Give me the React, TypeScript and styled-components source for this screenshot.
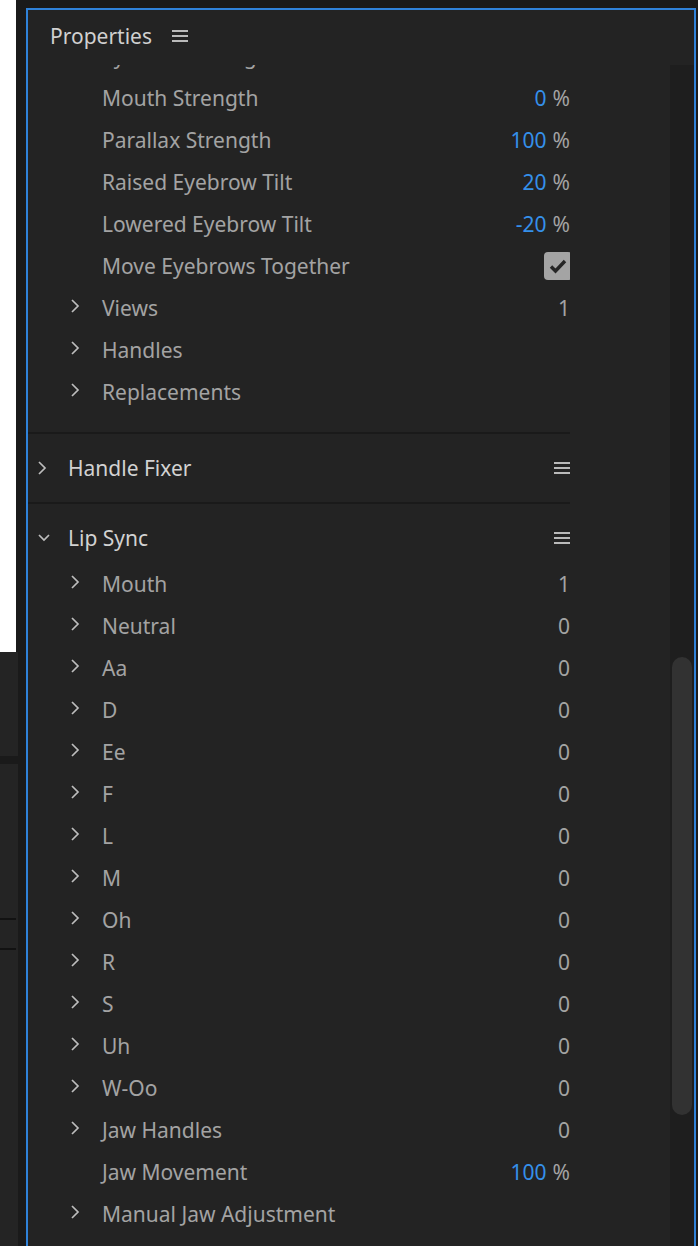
import styled, { createGlobalStyle } from "styled-components";

const GlobalStyle = createGlobalStyle`
  html, body {
    margin: 0;
    padding: 0;
    background: #1a1a1a;
    overflow: hidden;
  }
  body {
    font-family: "Noto Sans", "Open Sans", sans-serif;
  }
`;

const Frame = styled.div`
  display: flex;
  width: 698px;
  height: 1246px;
  overflow: hidden;
`;

const LeftDock = styled.div`
  width: 18px;
  display: flex;
  flex-direction: column;
  flex-shrink: 0;
`;

const WhiteArea = styled.div`
  height: 652px;
  width: 16px;
  background: #ffffff;
`;

const DockPanel = styled.div<{ $h?: number }>`
  background: #242424;
  height: ${(p) => (p.$h ? `${p.$h}px` : "auto")};
  flex: ${(p) => (p.$h ? "none" : "1")};
  display: flex;
  flex-direction: column;
`;

const DockBand = styled.div`
  height: 8px;
  background: #1a1a1a;
`;

const DockLine = styled.div<{ $top: number }>`
  width: 16px;
  height: 2px;
  background: #121212;
  margin-top: ${(p) => p.$top}px;
`;

const Gutter = styled.div`
  width: 8px;
  flex-shrink: 0;
`;

const Panel = styled.section`
  margin-top: 8px;
  width: 670px;
  height: 1260px;
  flex-shrink: 0;
  box-sizing: border-box;
  border: 2px solid #2f82d9;
  background: #232323;
  display: flex;
  flex-direction: column;
`;

const PanelHeader = styled.header`
  height: 55px;
  padding-bottom: 3px;
  box-sizing: border-box;
  flex-shrink: 0;
  display: flex;
  align-items: center;
  gap: 20px;
  padding-left: 22px;
  background: #232323;
`;

const PanelTitle = styled.span`
  font-size: 21px;
  color: #d0d0d0;
`;

const Body = styled.div`
  flex: 1;
  display: flex;
  overflow: hidden;
`;

const Content = styled.div`
  width: 542px;
  flex-shrink: 0;
  overflow: hidden;
`;

// scrolled position of the property list
const ScrollInner = styled.div<{ $offset: number }>`
  margin-top: ${(p) => -p.$offset}px;
`;

const Spacer = styled.div`
  flex: 1;
`;

const ScrollTrack = styled.div`
  width: 24px;
  background: #1e1e1e;
  padding: 0 2px;
  box-sizing: border-box;
`;

const ScrollThumb = styled.div`
  margin-top: 592px;
  height: 458px;
  border-radius: 10px;
  background: #323232;
`;

const SectionBody = styled.div<{ $padBottom?: number }>`
  padding-bottom: ${(p) => p.$padBottom ?? 0}px;
`;

const Divider = styled.div`
  height: 2px;
  background: #1a1a1a;
`;

const SectionHeader = styled.div<{ $padTop: number; $padBottom: number }>`
  height: 42px;
  padding: ${(p) => p.$padTop}px 0 ${(p) => p.$padBottom}px;
  display: flex;
  align-items: center;
`;

const SectionToggle = styled.span`
  width: 31px;
  padding-left: 9px;
  display: flex;
  align-items: center;
  color: #bdbdbd;
`;

const SectionTitle = styled.span`
  flex: 1;
  font-size: 21px;
  color: #d2d2d2;
`;

const Row = styled.div`
  height: 42px;
  display: flex;
  align-items: center;
`;

const RowToggle = styled.span`
  width: 32px;
  margin-left: 42px;
  display: flex;
  align-items: center;
  color: #bdbdbd;
  transform: translateY(-2px);
`;

const RowLabel = styled.span`
  flex: 1;
  font-size: 21px;
  color: #a3a3a3;
  white-space: nowrap;
`;

const RowValue = styled.span`
  font-size: 21px;
  color: #a3a3a3;
  display: flex;
  gap: 6px;
`;

const Number = styled.span<{ $accent?: boolean }>`
  color: ${(p) => (p.$accent ? "#3590ea" : "#a3a3a3")};
`;

const Checkbox = styled.span`
  width: 28px;
  height: 28px;
  border-radius: 4px;
  background: #a4a4a4;
  display: flex;
  align-items: center;
  justify-content: center;
  margin-right: -2px;
`;

const Hamburger = () => (
  <svg width="16" height="14" viewBox="0 0 16 14">
    <rect x="0" y="1" width="16" height="2" fill="#bababa" />
    <rect x="0" y="6" width="16" height="2" fill="#bababa" />
    <rect x="0" y="11" width="16" height="2" fill="#bababa" />
  </svg>
);

const ChevronRight = () => (
  <svg width="10" height="16" viewBox="0 0 10 16">
    <polyline
      points="2,2 8,8 2,14"
      fill="none"
      stroke="currentColor"
      strokeWidth="1.7"
    />
  </svg>
);

const ChevronDown = () => (
  <svg width="14" height="10" viewBox="0 0 14 10">
    <polyline
      points="2,2 7,7 12,2"
      fill="none"
      stroke="currentColor"
      strokeWidth="1.7"
    />
  </svg>
);

type Item = {
  label: string;
  value?: string;
  unit?: boolean;
  nested?: boolean;
  check?: boolean;
};

const faceItems: Item[] = [
  { label: "Eyebrow Strength", value: "100", unit: true },
  { label: "Mouth Strength", value: "0", unit: true },
  { label: "Parallax Strength", value: "100", unit: true },
  { label: "Raised Eyebrow Tilt", value: "20", unit: true },
  { label: "Lowered Eyebrow Tilt", value: "-20", unit: true },
  { label: "Move Eyebrows Together", check: true },
  { label: "Views", value: "1", nested: true },
  { label: "Handles", nested: true },
  { label: "Replacements", nested: true },
];

const lipItems: Item[] = [
  ...["Mouth", "Neutral", "Aa", "D", "Ee", "F", "L", "M", "Oh", "R", "S", "Uh", "W-Oo", "Jaw Handles"].map(
    (label) => ({ label, value: label === "Mouth" ? "1" : "0", nested: true })
  ),
  { label: "Jaw Movement", value: "100", unit: true },
  { label: "Manual Jaw Adjustment", nested: true },
];

function PropertyRow({ item }: { item: Item }) {
  return (
    <Row>
      <RowToggle>{item.nested && <ChevronRight />}</RowToggle>
      <RowLabel>{item.label}</RowLabel>
      {item.check ? (
        <Checkbox>
          <svg width="18" height="16" viewBox="0 0 18 16">
            <polyline
              points="2,8.5 6.5,13 16,3"
              fill="none"
              stroke="#262626"
              strokeWidth="3.4"
            />
          </svg>
        </Checkbox>
      ) : (
        item.value && (
          <RowValue>
            <Number $accent={item.unit}>{item.value}</Number>
            {item.unit && <span>%</span>}
          </RowValue>
        )
      )}
    </Row>
  );
}

export default function App() {
  return (
    <>
      <GlobalStyle />
      <Frame>
        <LeftDock>
          <WhiteArea />
          <DockPanel $h={104} />
          <DockBand />
          <DockPanel>
            <DockLine $top={154} />
            <DockLine $top={28} />
          </DockPanel>
        </LeftDock>
        <Gutter />
        <Panel>
          <PanelHeader>
            <PanelTitle>Properties</PanelTitle>
            <Hamburger />
          </PanelHeader>
          <Body>
            <Content>
              <ScrollInner $offset={30}>
                <SectionBody $padBottom={19}>
                  {faceItems.map((item) => (
                    <PropertyRow key={item.label} item={item} />
                  ))}
                </SectionBody>
                <Divider />
                <SectionHeader $padTop={13} $padBottom={13}>
                  <SectionToggle>
                    <ChevronRight />
                  </SectionToggle>
                  <SectionTitle>Handle Fixer</SectionTitle>
                  <Hamburger />
                </SectionHeader>
                <Divider />
                <SectionHeader $padTop={13} $padBottom={4}>
                  <SectionToggle>
                    <ChevronDown />
                  </SectionToggle>
                  <SectionTitle>Lip Sync</SectionTitle>
                  <Hamburger />
                </SectionHeader>
                <SectionBody>
                  {lipItems.map((item) => (
                    <PropertyRow key={item.label} item={item} />
                  ))}
                </SectionBody>
              </ScrollInner>
            </Content>
            <Spacer />
            <ScrollTrack>
              <ScrollThumb />
            </ScrollTrack>
          </Body>
        </Panel>
      </Frame>
    </>
  );
}
